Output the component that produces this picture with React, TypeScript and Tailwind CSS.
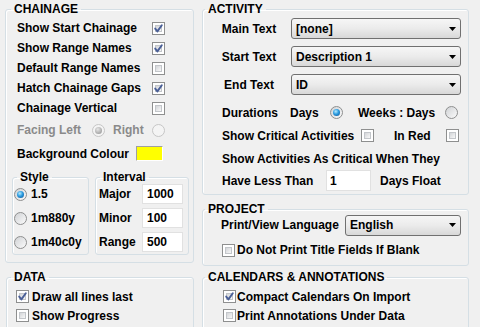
import React from "react";

function CheckBox({ checked = false }: { checked?: boolean }) {
  return (
    <span className="relative inline-block w-[13px] h-[13px] shrink-0 border border-[#8e8f8f] bg-white">
      <span className="absolute inset-[2px] bg-linear-to-br from-[#d3d5d8] to-[#f8f8f8] border border-[#c3c6ca]" />
      {checked && (
        <svg className="absolute inset-0" width="11" height="11" viewBox="0 0 11 11">
          <path d="M2.2 5.6 L4.4 8.4 L8.8 2.2" fill="none" stroke="#4a5f97" strokeWidth="1.9" strokeLinejoin="round" strokeLinecap="round" />
        </svg>
      )}
    </span>
  );
}

function Radio({ checked = false, disabled = false }: { checked?: boolean; disabled?: boolean }) {
  return (
    <span
      className={
        "relative inline-block w-[13px] h-[13px] shrink-0 rounded-full border " +
        (disabled
          ? "border-[#c6c6c6] bg-[#f4f4f4]"
          : "border-[#8e8f8f] bg-linear-to-br from-[#d0d2d5] to-[#fbfbfb]")
      }
    >
      {checked && !disabled && (
        <span className="absolute left-[2px] top-[2px] w-[7px] h-[7px] rounded-full bg-[radial-gradient(circle_at_40%_35%,#b7ecff_0%,#2b9be0_45%,#0d4e8c_100%)]" />
      )}
      {checked && disabled && (
        <span className="absolute left-[2px] top-[2px] w-[7px] h-[7px] rounded-full bg-[radial-gradient(circle_at_40%_35%,#e6e6e6_0%,#b0b0b0_60%,#8c8c8c_100%)]" />
      )}
    </span>
  );
}

function Combo({ value, w }: { value: string; w: string }) {
  return (
    <div
      className={
        w +
        " h-[21px] shrink-0 flex items-center justify-between pl-[4px] pr-[4px] border border-[#707070] rounded-[3px] bg-linear-to-b from-[#f6f6f6] via-[#ebebeb] to-[#d8d8d8]"
      }
    >
      <span>{value}</span>
      <svg width="7" height="4" viewBox="0 0 7 4">
        <polygon points="0,0 7,0 3.5,4" fill="#000" />
      </svg>
    </div>
  );
}

function TextBox({ value, w }: { value: string; w: string }) {
  return (
    <div className={w + " h-[20px] shrink-0 flex items-center pl-[4px] bg-white border border-[#e1e1e1]"}>
      {value}
    </div>
  );
}

function Legend({ children, ml }: { children: React.ReactNode; ml: string }) {
  return <legend className={ml + " px-[3px] leading-[14px]"}>{children}</legend>;
}

const groupCls = "border border-[#d5dfe5] rounded-[3px] shadow-[inset_1px_1px_0_#ffffff]";

export default function App() {
  return (
    <div className="w-[480px] h-[327px] overflow-hidden bg-[#f0f0f0] text-black font-bold text-[12px] leading-[14px] font-['Liberation_Sans',Arial,sans-serif] flex pt-[2px]">
      {/* Left column */}
      <div className="flex flex-col w-[194px] shrink-0">
        <fieldset className={groupCls + " ml-[5px] w-[189px] h-[261px] shrink-0"}>
          <Legend ml="ml-[5px]">CHAINAGE</Legend>
          <div className="flex flex-col pt-[2px] pl-[11px]">
            {[
              ["Show Start Chainage", true],
              ["Show Range Names", true],
              ["Default Range Names", false],
              ["Hatch Chainage Gaps", true],
              ["Chainage Vertical", false],
            ].map(([label, c]) => (
              <div key={label as string} className="h-[20px] flex items-center">
                <span className="w-[135px]">{label as string}</span>
                <CheckBox checked={c as boolean} />
              </div>
            ))}
            <div className="h-[24px] flex items-center text-[#8a8a8a]">
              <span className="w-[75px]">Facing Left</span>
              <Radio checked disabled />
              <span className="ml-[8px] w-[39px]">Right</span>
              <Radio disabled />
            </div>
            <div className="h-[23px] flex items-center">
              <span className="w-[119px]">Background Colour</span>
              <span className="w-[27px] h-[15px] bg-[#ffff00] border border-t-[#a0a0a0] border-l-[#a0a0a0] border-r-[#ffffff] border-b-[#ffffff]" />
            </div>
          </div>
          <div className="flex mt-[5px] ml-[6px]">
            <fieldset className={groupCls + " w-[77px] h-[85px] shrink-0"}>
              <Legend ml="ml-[4px]">Style</Legend>
              <div className="flex flex-col -mt-[2px] pl-[1px]">
                {[["1.5", true], ["1m880y", false], ["1m40c0y", false]].map(([l, c]) => (
                  <div key={l as string} className="h-[24px] flex items-center">
                    <Radio checked={c as boolean} />
                    <span className="ml-[4px]">{l as string}</span>
                  </div>
                ))}
              </div>
            </fieldset>
            <fieldset className={groupCls + " ml-[6px] w-[94px] h-[85px] shrink-0"}>
              <Legend ml="ml-[4px]">Interval</Legend>
              <div className="flex flex-col -mt-[2px] pl-[3px]">
                {[["Major", "1000"], ["Minor", "100"], ["Range", "500"]].map(([l, v]) => (
                  <div key={l} className="h-[24px] flex items-center">
                    <span className="w-[43px]">{l}</span>
                    <TextBox value={v} w="w-[41px]" />
                  </div>
                ))}
              </div>
            </fieldset>
          </div>
        </fieldset>
        <fieldset className={groupCls + " ml-[6px] mt-[7px] w-[188px] h-[80px] shrink-0"}>
          <Legend ml="ml-[4px]">DATA</Legend>
          <div className="flex flex-col pt-[3px] pl-[9px]">
            <div className="h-[19px] flex items-center">
              <CheckBox checked />
              <span className="ml-[3px]">Draw all lines last</span>
            </div>
            <div className="h-[19px] flex items-center">
              <CheckBox />
              <span className="ml-[3px]">Show Progress</span>
            </div>
          </div>
        </fieldset>
      </div>

      {/* Right column */}
      <div className="flex flex-col ml-[8px] w-[267px] shrink-0">
        <fieldset className={groupCls + " w-[267px] h-[193px] shrink-0"}>
          <Legend ml="ml-[2px]">ACTIVITY</Legend>
          <div className="flex flex-col gap-[7px] pt-[2px]">
            {[["Main Text", "[none]"], ["Start Text", "Description 1"], ["End Text", "ID"]].map(([l, v]) => (
              <div key={l} className="flex items-center h-[21px]">
                <span className="ml-[18px] w-[56px] text-center">{l}</span>
                <div className="ml-[14px]">
                  <Combo value={v} w="w-[170px]" />
                </div>
              </div>
            ))}
          </div>
          <div className="flex flex-col mt-[6px] pl-[19px]">
            <div className="h-[23px] flex items-center">
              <span className="w-[68px]">Durations</span>
              <span className="w-[40px]">Days</span>
              <Radio checked />
              <span className="ml-[15px] w-[87px]">Weeks : Days</span>
              <Radio />
            </div>
            <div className="h-[23px] flex items-center">
              <span className="w-[139px]">Show Critical Activities</span>
              <CheckBox />
              <span className="ml-[20px] w-[52px]">In Red</span>
              <CheckBox />
            </div>
            <div className="h-[23px] flex items-center">
              <span>Show Activities As Critical When They</span>
            </div>
            <div className="h-[21px] flex items-center">
              <span className="w-[104px]">Have Less Than</span>
              <div className="w-[45px] h-[21px] flex items-center pl-[3px] bg-white border border-[#e1e1e1]">1</div>
              <span className="ml-[9px]">Days Float</span>
            </div>
          </div>
        </fieldset>
        <fieldset className={groupCls + " mt-[7px] w-[267px] h-[64px] shrink-0"}>
          <Legend ml="ml-[2px]">PROJECT</Legend>
          <div className="flex flex-col -mt-[2px] pl-[18px]">
            <div className="h-[22px] flex items-center">
              <span className="w-[124px]">Print/View Language</span>
              <Combo value="English" w="w-[116px]" />
            </div>
            <div className="h-[20px] mt-[4px] flex items-center pl-[1px]">
              <CheckBox />
              <span className="ml-[2px]">Do Not Print Title Fields If Blank</span>
            </div>
          </div>
        </fieldset>
        <fieldset className={groupCls + " mt-[4px] w-[267px] h-[80px] shrink-0"}>
          <Legend ml="ml-[2px]">CALENDARS &amp; ANNOTATIONS</Legend>
          <div className="flex flex-col pt-[3px] pl-[20px]">
            <div className="h-[19px] flex items-center">
              <CheckBox checked />
              <span className="ml-[1px]">Compact Calendars On Import</span>
            </div>
            <div className="h-[19px] flex items-center">
              <CheckBox />
              <span className="ml-[1px]">Print Annotations Under Data</span>
            </div>
          </div>
        </fieldset>
      </div>
    </div>
  );
}
